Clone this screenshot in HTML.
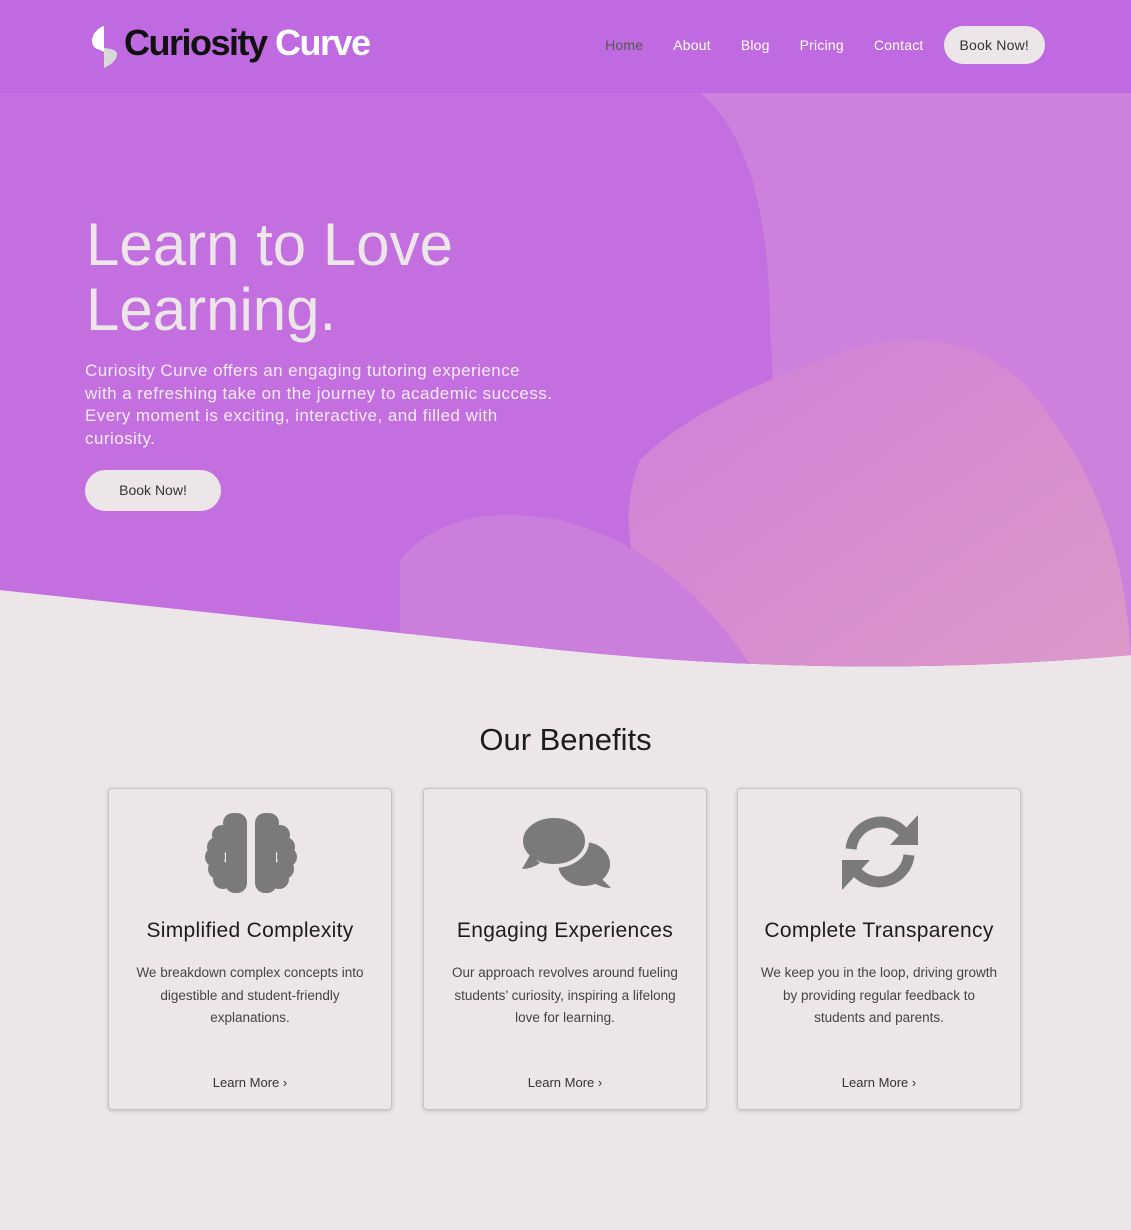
<!DOCTYPE html>
<html><head><meta charset="utf-8"><style>
*{margin:0;padding:0;box-sizing:border-box}
body{width:1131px;height:1230px;background:#ece6e8;font-family:"Liberation Sans",sans-serif;position:relative;overflow:hidden}
.hero{position:absolute;left:0;top:0;width:1131px;height:680px}
.logo{position:absolute;left:90px;top:22px;font-size:36px;font-weight:bold;letter-spacing:-1.5px}
nav{position:absolute;top:26px;right:86px;display:flex;align-items:center;font-size:14px;color:#fff;letter-spacing:.2px}
nav a{margin-right:30px}
.btn{background:#ece6e8;color:#333;border-radius:20px;display:inline-block;font-size:14px}
h1{position:absolute;left:86px;top:212px;color:#ece6e8;font-size:60px;font-weight:normal;line-height:65px}
.lead{position:absolute;left:85px;top:360px;width:468px;color:#f3ebf6;font-size:17px;line-height:22.5px;letter-spacing:.45px}
h2{position:absolute;top:722px;width:100%;text-align:center;font-size:31px;font-weight:normal;color:#1c1c1c}
.card{position:absolute;top:788px;width:284px;height:322px;border:1px solid #c8c2c4;border-radius:4px;box-shadow:0 1px 4px rgba(0,0,0,.18);text-align:center;background:#ece6e8}
.card svg{position:absolute;top:22px;left:0}
.card h3{position:absolute;top:130px;width:100%;font-size:21px;font-weight:normal;color:#1c1c1c;letter-spacing:.3px}
.card p{position:absolute;top:173px;left:20px;right:20px;font-size:13.5px;line-height:22.5px;color:#444}
.card .lm{position:absolute;top:286px;width:100%;font-size:13px;color:#333}
</style></head><body>
<svg class="hero" viewBox="0 0 1131 680">
<defs>
<linearGradient id="b2" x1="0" y1="0" x2="1" y2="1"><stop offset="0" stop-color="#cf7fd9"/><stop offset="1" stop-color="#dc9ac8"/></linearGradient>
<clipPath id="cl"><path d="M0 0H1131V655Q850 680 560 650Q280 620 0 590Z"/></clipPath>
</defs>
<g clip-path="url(#cl)">
<rect width="1131" height="680" fill="#c26ae1"/>
<rect y="93" width="1131" height="600" fill="#c46fe0"/>
<path d="M700 93H1131V680H760Q780 450 770 330Q770 150 700 93Z" fill="#cc82dc"/>
<path d="M640 460Q700 400 850 350Q950 320 1020 380Q1131 500 1131 680H700Q600 560 640 460Z" fill="url(#b2)"/>
<path d="M400 560Q450 500 560 520Q680 550 760 680H400Z" fill="#ca7fdc"/>
</g>
<rect width="1131" height="93" fill="#c06ae2"/>
</svg>
<div class="logo"><svg width="30" height="46" viewBox="0 0 30 46" style="position:absolute;left:0;top:2px"><path d="M13 2Q2 8 2 17Q2 24 10 26L14 28V2Z" fill="#fff"/><path d="M14 24L14 44Q27 38 27 30Q27 25 14 24Z" fill="#d8d8d8"/></svg><span style="margin-left:34px;color:#111">Curiosity</span> <span style="color:#fff">Curve</span></div>
<nav><a style="color:#555">Home</a><a>About</a><a>Blog</a><a>Pricing</a><a>Contact</a><span class="btn" style="padding:11px 16px;margin-left:-10px">Book Now!</span></nav>
<h1>Learn to Love<br>Learning.</h1>
<div class="lead">Curiosity Curve offers an engaging tutoring experience with a refreshing take on the journey to academic success. Every moment is exciting, interactive, and filled with curiosity.</div>
<span class="btn" style="position:absolute;left:85px;top:470px;width:136px;height:41px;line-height:41px;text-align:center;border-radius:21px">Book Now!</span>
<h2>Our Benefits</h2>
<div class="card" style="left:108px"><svg width="284" height="90" viewBox="0 0 284 90"><g fill="#7a7a7a" id="bl"><rect x="117" y="2" width="21" height="80" rx="10"/><circle cx="124" cy="12" r="10"/><circle cx="113" cy="24" r="10"/><circle cx="108" cy="36" r="10"/><circle cx="106" cy="46" r="10"/><circle cx="109" cy="58" r="10"/><circle cx="114" cy="68" r="10"/><circle cx="126" cy="72" r="10"/></g><use href="#bl" transform="translate(284 0) scale(-1 1)"/></svg>
<h3>Simplified Complexity</h3><p>We breakdown complex concepts into digestible and student-friendly explanations.</p><div class="lm">Learn More ›</div></div>
<div class="card" style="left:423px"><svg width="284" height="90" viewBox="0 0 284 90"><g fill="#7a7a7a"><ellipse cx="160" cy="53" rx="26" ry="22"/><path d="M170 60L187 77Q178 77 170 72Z"/><ellipse cx="130" cy="30" rx="33" ry="25" stroke="#ece6e8" stroke-width="4"/><path d="M106 44L98 58Q108 58 116 52Z"/></g></svg>
<h3>Engaging Experiences</h3><p>Our approach revolves around fueling students’ curiosity, inspiring a lifelong love for learning.</p><div class="lm">Learn More ›</div></div>
<div class="card" style="left:737px"><svg width="284" height="90" viewBox="0 0 284 90"><g fill="#7a7a7a"><path d="M113 38 A30 30 0 0 1 166 22" stroke="#7a7a7a" stroke-width="11" fill="none"/><path d="M180 4V34H152Z"/><path d="M171 44 A30 30 0 0 1 118 60" stroke="#7a7a7a" stroke-width="11" fill="none"/><path d="M104 79V49H132Z"/></g></svg>
<h3>Complete Transparency</h3><p>We keep you in the loop, driving growth by providing regular feedback to students and parents.</p><div class="lm">Learn More ›</div></div>
</body></html>
